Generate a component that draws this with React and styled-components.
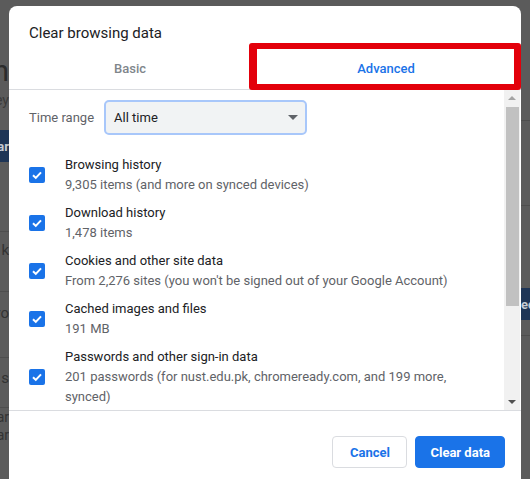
import styled, { createGlobalStyle } from 'styled-components'

const GlobalStyle = createGlobalStyle`
  html, body {
    margin: 0;
    padding: 0;
    background: #5b5b5b;
    font-family: Roboto, "Liberation Sans", sans-serif;
  }
  * { box-sizing: border-box; }
`

const items = [
  { title: 'Browsing history', sub: '9,305 items (and more on synced devices)' },
  { title: 'Download history', sub: '1,478 items' },
  { title: 'Cookies and other site data', sub: "From 2,276 sites (you won't be signed out of your Google Account)" },
  { title: 'Cached images and files', sub: '191 MB' },
  { title: 'Passwords and other sign-in data', sub: '201 passwords (for nust.edu.pk, chromeready.com, and 199 more, synced)' },
]

// bits of the dimmed page that peek out on either side of the dialog
const leftBits = [
  { h: 52 },
  { h: 36, text: 'th', size: 30, color: '#2c2c2c' },
  { h: 24, text: 'ey', size: 14, color: '#3a3a3a' },
  { h: 18 },
  { h: 32, text: 'ar', size: 13, color: '#c4cad3', bg: '#1e3556', bold: true },
  { h: 70, line: true },
  { h: 36, text: 'k', size: 15, color: '#333' },
  { h: 24, line: true },
  { h: 42, text: 'ro', size: 15, color: '#333' },
  { h: 24, line: true },
  { h: 40, text: 's', size: 15, color: '#333' },
  { h: 10, line: true },
  { h: 18, text: 'ar', size: 14, color: '#333' },
  { h: 18, text: 'ar', size: 14, color: '#333' },
]

const rightBits = [
  { h: 121, line: true },
  { h: 85, line: true },
  { h: 82 },
  { h: 32, text: 'ec', size: 13, color: '#c4cad3', bg: '#1e3556', bold: true },
  { h: 16, line: true },
]

const Check = () => (
  <svg width="12" height="12" viewBox="0 0 12 12">
    <path d="M2 6.2 L4.8 8.9 L10 3.4" fill="none" stroke="#fff" strokeWidth="2" />
  </svg>
)

const App = () => {
  return (
    <>
      <GlobalStyle />
      <Page>
        <Strip>
          {leftBits.map((b, i) => (
            <Ghost key={i} $h={b.h} $size={b.size} $color={b.color} $bg={b.bg} $line={b.line} $bold={b.bold}>
              {b.text && <span>{b.text}</span>}
            </Ghost>
          ))}
        </Strip>

        <Dialog>
          <Title>Clear browsing data</Title>
          <Tabs>
            <Tab>Basic</Tab>
            <Tab $active>
              Advanced
              <Highlight />
            </Tab>
          </Tabs>

          <ScrollArea>
            <Content>
              <RangeRow>
                <RangeLabel>Time range</RangeLabel>
                <Select>
                  All time
                  <Caret />
                </Select>
              </RangeRow>

              <List>
                {items.map(item => (
                  <Item key={item.title}>
                    <Box><Check /></Box>
                    <ItemText>
                      <ItemTitle>{item.title}</ItemTitle>
                      <ItemSub>{item.sub}</ItemSub>
                    </ItemText>
                  </Item>
                ))}
              </List>
            </Content>

            <Scrollbar>
              <ScrollButton><Arrow $up /></ScrollButton>
              <Thumb />
              <Track />
              <ScrollButton><Arrow /></ScrollButton>
            </Scrollbar>
          </ScrollArea>

          <Footer>
            <Button>Cancel</Button>
            <Button $primary>Clear data</Button>
          </Footer>
        </Dialog>

        <Strip>
          {rightBits.map((b, i) => (
            <Ghost key={i} $h={b.h} $size={b.size} $color={b.color} $bg={b.bg} $line={b.line} $bold={b.bold} $start>
              {b.text && <span>{b.text}</span>}
            </Ghost>
          ))}
        </Strip>
      </Page>
    </>
  );
}

export default App;

const Page = styled.div`
  display: grid;
  grid-template-columns: 9px 512px 1fr;
  height: 479px;
  width: 530px;
  overflow: hidden;
  background: #5b5b5b;
`

const Strip = styled.div`
  display: flex;
  flex-direction: column;
  overflow: hidden;
`

const Ghost = styled.div`
  flex: 0 0 ${p => p.$h}px;
  display: flex;
  align-items: center;
  justify-content: ${p => (p.$start ? 'flex-start' : 'flex-end')};
  overflow: hidden;
  background: ${p => p.$bg || 'transparent'};
  border-bottom: ${p => (p.$line ? '1px solid #4e4e4e' : 'none')};
  font-size: ${p => p.$size || 13}px;
  font-weight: ${p => (p.$bold ? 700 : 400)};
  color: ${p => p.$color || '#333'};
  white-space: nowrap;

  span {
    flex-shrink: 0;
  }
`

const Dialog = styled.div`
  margin-top: 6px;
  height: 480px;
  background: #fff;
  border-radius: 8px 8px 0 0;
  display: flex;
  flex-direction: column;
`

const Title = styled.div`
  padding: 16px 20px 0;
  font-size: 15px;
  line-height: 22px;
  color: #202124;
`

const Tabs = styled.div`
  display: grid;
  grid-template-columns: 242px 1fr;
  height: 46px;
  border-bottom: 1px solid #dadce0;
`

const Tab = styled.div`
  position: relative;
  display: flex;
  align-items: center;
  justify-content: center;
  padding-top: 3px;
  font-size: 13px;
  font-weight: 500;
  color: ${p => (p.$active ? '#1a73e8' : '#80868b')};
`

const Highlight = styled.div`
  position: absolute;
  top: -1px;
  left: -2px;
  right: 0;
  bottom: -1px;
  border: 6px solid #e3000b;
  border-left-width: 8px;
  border-right-width: 7px;
  border-radius: 3px;
`

const ScrollArea = styled.div`
  display: flex;
  height: 321px;
  border-bottom: 1px solid #dadce0;
`

const Content = styled.div`
  flex: 1;
  padding: 10px 20px 0;
  overflow: hidden;
`

const RangeRow = styled.div`
  display: flex;
  align-items: center;
  gap: 10px;
`

const RangeLabel = styled.div`
  font-size: 13px;
  color: #5f6368;
`

const Select = styled.div`
  width: 203px;
  height: 35px;
  display: flex;
  align-items: center;
  justify-content: space-between;
  padding: 0 7px 0 8px;
  border: 2px solid #a8c7fa;
  border-radius: 5px;
  background: #f1f3f4;
  font-size: 13px;
  color: #202124;
`

const Caret = styled.span`
  width: 0;
  height: 0;
  border-left: 5px solid transparent;
  border-right: 5px solid transparent;
  border-top: 5px solid #5f6368;
`

const List = styled.div`
  display: flex;
  flex-direction: column;
  margin-top: 16px;
`

const Item = styled.div`
  display: flex;
  align-items: center;
  gap: 20px;
  min-height: 48px;
  padding: 4px 0;
`

const Box = styled.div`
  flex: 0 0 16px;
  height: 16px;
  border-radius: 2px;
  background: #1a73e8;
  display: flex;
  align-items: center;
  justify-content: center;
`

const ItemText = styled.div`
  max-width: 398px;
  font-size: 13px;
  line-height: 20px;
`

const ItemTitle = styled.div`
  color: #202124;
`

const ItemSub = styled.div`
  color: #5f6368;
`

const Scrollbar = styled.div`
  flex: 0 0 16px;
  margin-right: 1px;
  display: flex;
  flex-direction: column;
  background: #f1f1f1;
`

const ScrollButton = styled.div`
  height: 16px;
  display: flex;
  align-items: center;
  justify-content: center;
`

const Arrow = styled.span`
  width: 0;
  height: 0;
  border-left: 4px solid transparent;
  border-right: 4px solid transparent;
  ${p => (p.$up ? 'border-bottom: 4px solid #a3a3a3;' : 'border-top: 4px solid #505050;')}
`

const Thumb = styled.div`
  height: 199px;
  margin: 1px 1px 0 2px;
  background: #c1c1c1;
`

const Track = styled.div`
  flex: 1;
`

const Footer = styled.div`
  display: flex;
  justify-content: flex-end;
  gap: 8px;
  padding: 25px 16px 0;
`

const Button = styled.button`
  height: 32px;
  padding: 0 ${p => (p.$primary ? 14 : 16.5)}px;
  border-radius: 4px;
  font-family: Roboto, "Liberation Sans", sans-serif;
  font-size: 13px;
  font-weight: 700;
  border: 1px solid ${p => (p.$primary ? '#1a73e8' : '#dadce0')};
  background: ${p => (p.$primary ? '#1a73e8' : '#fff')};
  color: ${p => (p.$primary ? '#fff' : '#1a73e8')};
`
